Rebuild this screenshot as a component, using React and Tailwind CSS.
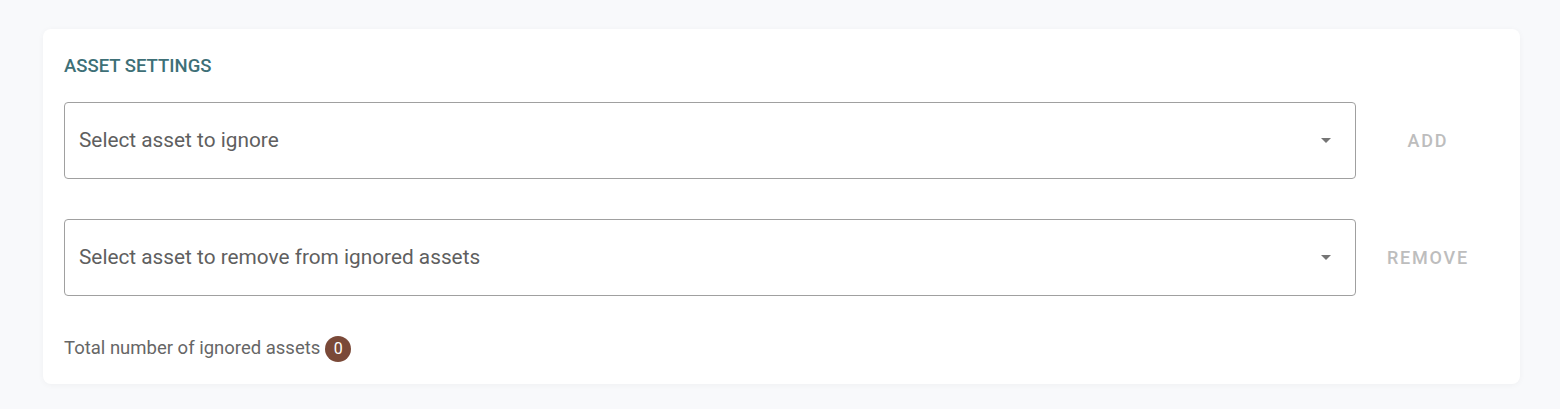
const rows = [
  { placeholder: "Select asset to ignore", action: "ADD" },
  { placeholder: "Select asset to remove from ignored assets", action: "REMOVE" },
];

function Caret() {
  return (
    <svg width="10" height="5" viewBox="0 0 10 5" className="text-[#757575]">
      <path d="M0 0h10L5 5z" fill="currentColor" />
    </svg>
  );
}

export default function App() {
  return (
    <div className="min-h-[409px] bg-[#f8f9fb] pl-[43px] pr-[40px] pt-[29px] pb-[25px] font-['Roboto',sans-serif]">
      <div className="rounded-lg bg-white pl-[21px] pr-5 pt-[25px] pb-[22px] shadow-[0_1px_6px_rgba(0,0,0,0.04)]">
        <h2 className="text-[18.5px] leading-6 font-medium uppercase text-[#3e7077]">Asset Settings</h2>

        <div className="mt-[24px] flex flex-col gap-[40px]">
          {rows.map((r) => (
            <div key={r.action} className="flex items-center">
              <button
                type="button"
                className="flex h-[77px] flex-1 items-center justify-between rounded border border-[#a0a0a0] pl-[14px] pr-6 text-left"
              >
                <span className="text-[20.8px] text-[#5f5f5f]">{r.placeholder}</span>
                <Caret />
              </button>
              <div className="flex w-[144px] justify-center">
                <span className="text-[18px] font-medium tracking-[0.1em] text-[#bdbdbd]">{r.action}</span>
              </div>
            </div>
          ))}
        </div>

        <div className="mt-[40px] flex h-[26px] items-center gap-[5px] text-[18.5px] text-[#666]">
          <span>Total number of ignored assets</span>
          <span className="flex h-[26px] w-[26px] items-center justify-center rounded-full bg-[#7a4938] text-[16px] text-white">0</span>
        </div>
      </div>
    </div>
  );
}
